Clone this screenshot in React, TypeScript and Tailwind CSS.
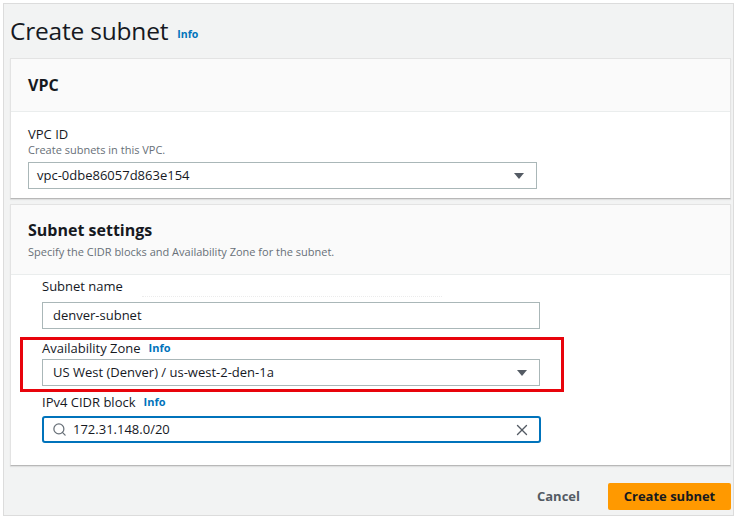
import React from 'react';
import { Search, X } from 'lucide-react';

const font = { fontFamily: '"Open Sans", "Noto Sans", Arial, sans-serif' };

const Caret: React.FC = () => (
    <svg width="12" height="8" viewBox="0 0 12 8" className="shrink-0">
        <path d="M1 1h10L6 7z" fill="#545b64" />
    </svg>
);

const Info: React.FC<{ className?: string }> = ({ className = '' }) => (
    <span className={`font-bold text-[#0073bb] ${className}`}>Info</span>
);

export default function App() {
    return (
        <div className="w-[740px] h-[520px] bg-white pt-[3px] pl-[3px] overflow-hidden" style={font}>
            <div className="w-[731px] h-[513px] border border-[#dcdcdc] bg-[#f2f3f3] pl-[6px] pr-[2px] text-[#16191f]">
                {/* title */}
                <div className="h-[54px] flex items-center gap-[9px] pt-[1px]">
                    <h1 className="text-[24.5px] leading-none tracking-[-0.2px] text-[#16191f]">Create subnet</h1>
                    <Info className="text-[10.5px] mt-[6px]" />
                </div>

                {/* VPC panel */}
                <div className="w-[721px] bg-white border border-[#e3e3e3] border-b-[#b8b8b8] shadow-[0_1px_1px_rgba(0,0,0,0.08)]">
                    <div className="h-[53px] bg-[#fafafa] border-b border-[#eaeded] flex items-center px-[17px]">
                        <h2 className="text-[16px] font-bold">VPC</h2>
                    </div>
                    <div className="px-[17px] pt-[14px] pb-[9px]">
                        <div className="text-[13px] leading-[16px]">VPC ID</div>
                        <div className="text-[11px] leading-[14px] text-[#687078] mt-[1px]">Create subnets in this VPC.</div>
                        <div className="mt-[5px] w-[509px] h-[27px] border border-[#aab7b8] flex items-center justify-between pl-[8px] pr-[11px] text-[13px]">
                            <span>vpc-0dbe86057d863e154</span>
                            <Caret />
                        </div>
                    </div>
                </div>

                {/* Subnet settings panel */}
                <div className="mt-[5px] w-[721px] bg-white border border-[#e3e3e3] border-b-[#b8b8b8] shadow-[0_1px_1px_rgba(0,0,0,0.08)]">
                    <div className="h-[70px] bg-[#fafafa] border-b border-[#eaeded] px-[17px] pt-[14px]">
                        <h2 className="text-[16px] font-bold leading-[22px]">Subnet settings</h2>
                        <p className="text-[11px] leading-[14px] text-[#687078] mt-[4px]">Specify the CIDR blocks and Availability Zone for the subnet.</p>
                    </div>
                    <div className="pl-[9px] pt-[3px] pb-[22px]">
                        <div className="pl-[22px]">
                            <div className="text-[13px] leading-[16px]">Subnet name</div>
                            <div className="mt-[2px] h-[3px] w-[300px] border-t border-dotted border-[#ececec] ml-[100px]" />
                            <div className="mt-[3px] w-[498px] h-[27px] border border-[#aab7b8] flex items-center pl-[10px] text-[13px]">
                                denver-subnet
                            </div>
                        </div>

                        <div className="mt-[8px] w-[544px] h-[55px] border-[3px] border-[#e8040c] pl-[19px]">
                            <div className="text-[13px] leading-[16px] flex items-center gap-[8px]">
                                Availability Zone <Info className="text-[11px]" />
                            </div>
                            <div className="mt-[3px] w-[498px] h-[27px] border border-[#aab7b8] flex items-center justify-between pl-[10px] pr-[11px] text-[13px]">
                                <span>US West (Denver) / us-west-2-den-1a</span>
                                <Caret />
                            </div>
                        </div>

                        <div className="pl-[22px] mt-[2px]">
                            <div className="text-[13px] leading-[16px] flex items-center gap-[8px]">
                                IPv4 CIDR block <Info className="text-[11px]" />
                            </div>
                            <div className="mt-[6px] w-[499px] h-[27px] border-2 border-[#0073bb] rounded-[3px] flex items-center justify-between pl-[8px] pr-[8px] text-[13px]">
                                <span className="flex items-center gap-[6px]">
                                    <Search size={15} strokeWidth={2} color="#687078" />
                                    172.31.148.0/20
                                </span>
                                <X size={18} strokeWidth={1.8} color="#545b64" />
                            </div>
                        </div>
                    </div>
                </div>

                {/* footer */}
                <div className="w-[721px] mt-[17px] flex items-center justify-end gap-[28px]">
                    <button className="text-[13px] font-bold text-[#545b64]">Cancel</button>
                    <button className="w-[123px] h-[27px] bg-[#ff9900] rounded-[2px] text-[13px] font-bold text-[#16191f]">
                        Create subnet
                    </button>
                </div>
            </div>
        </div>
    );
}
